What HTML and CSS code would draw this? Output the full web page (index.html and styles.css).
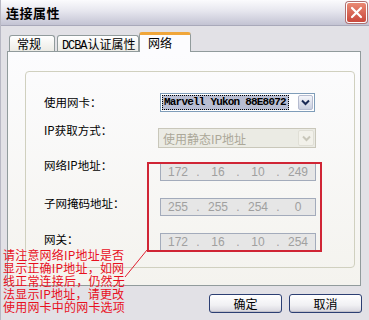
FILE: index.html
```html
<!DOCTYPE html>
<html lang="zh-CN">
<head>
    <meta charset="UTF-8">
    <title>连接属性</title>
    <link rel="stylesheet" href="styles.css">
</head>
<body>
    <div class="window">
        <div class="titlebar">
            <span class="title">连接属性</span>
            <span class="close-btn">
                <svg width="13" height="13" viewBox="0 0 13 13"><path d="M2 2 L11 11 M11 2 L2 11" stroke="#fff" stroke-width="2.2" stroke-linecap="round"/></svg>
            </span>
        </div>

        <div class="tabs">
            <div class="tab">常规</div>
            <div class="tab tab-wide"><span class="mono">DCBA</span>认证属性</div>
            <div class="tab active">网络</div>
        </div>

        <div class="panel">
            <div class="group">
                <div class="row">
                    <span class="label lbl-mid">使用网卡：</span>
                    <div class="combo">
                        <span class="combo-text"><span class="selected">Marvell Yukon 88E8072</span></span>
                        <span class="combo-btn">
                            <svg width="9" height="7" viewBox="0 0 9 7"><path d="M1 1.5 L4.5 5 L8 1.5" fill="none" stroke="#1a2a55" stroke-width="2"/></svg>
                        </span>
                    </div>
                </div>
                <div class="row">
                    <span class="label lbl-2">IP获取方式：</span>
                    <div class="combo disabled">
                        <span class="combo-text">使用静态IP地址</span>
                        <span class="combo-btn">
                            <svg width="9" height="7" viewBox="0 0 9 7"><path d="M1 1.5 L4.5 5 L8 1.5" fill="none" stroke="#c9c7ba" stroke-width="2"/></svg>
                        </span>
                    </div>
                </div>
                <div class="row">
                    <span class="label lbl-2">网络IP地址：</span>
                    <div class="ip-field">
                        <span class="oct">172</span><span class="dot">.</span><span class="oct">16</span><span class="dot">.</span><span class="oct">10</span><span class="dot">.</span><span class="oct">249</span>
                    </div>
                </div>
                <div class="row">
                    <span class="label lbl-5">子网掩码地址：</span>
                    <div class="ip-field">
                        <span class="oct">255</span><span class="dot">.</span><span class="oct">255</span><span class="dot">.</span><span class="oct">254</span><span class="dot">.</span><span class="oct">0</span>
                    </div>
                </div>
                <div class="row">
                    <span class="label lbl-6">网关：</span>
                    <div class="ip-field">
                        <span class="oct">172</span><span class="dot">.</span><span class="oct">16</span><span class="dot">.</span><span class="oct">10</span><span class="dot">.</span><span class="oct">254</span>
                    </div>
                </div>
            </div>
        </div>

        <div class="buttons">
            <button class="btn">确定</button>
            <button class="btn">取消</button>
        </div>
    </div>

    <!-- annotation overlay -->
    <div class="mark-box"></div>
    <svg class="mark-line" width="26" height="31" viewBox="0 0 26 31"><path d="M2 29 L24 2" stroke="#e02030" stroke-width="1"/></svg>
    <div class="note">
        请注意网络IP地址是否<br>
        显示正确IP地址，如网<br>
        线正常连接后，仍然无<br>
        法显示IP地址，请更改<br>
        使用网卡中的网卡选项
    </div>
</body>
</html>
```

FILE: styles.css
```css
body {
    margin: 0;
    font-family: "Noto Sans CJK SC", "Liberation Sans", sans-serif;
    font-size: 12px;
    color: #000;
    background: #e2e1e6;
    width: 369px;
    height: 320px;
    overflow: hidden;
    position: relative;
}

.window {
    height: 320px;
    border-left: 1px solid #b8b8c4;
    box-sizing: border-box;
}

/* title bar */
.titlebar {
    height: 25px;
    display: flex;
    align-items: center;
    justify-content: space-between;
    padding: 0 2px 0 5px;
    background: linear-gradient(#fbfbfd, #e6e6ee 45%, #c3c3d3);
    border-bottom: 1px solid #a9a9ba;
}

.title {
    font-size: 13px;
    font-weight: bold;
    letter-spacing: 0.5px;
}

.close-btn {
    width: 19px;
    height: 19px;
    display: flex;
    align-items: center;
    justify-content: center;
    border: 1px solid #fff;
    border-radius: 3px;
    background: linear-gradient(#e98a74, #c9483c);
    box-shadow: 0 0 0 1px #b07070;
}

/* tabs */
.tabs {
    display: flex;
    align-items: flex-end;
    height: 19px;
    margin-top: 6px;
    padding-left: 8px;
}

.tab {
    height: 16px;
    width: 46px;
    margin-right: 2px;
    padding-left: 7px;
    box-sizing: border-box;
    line-height: 16px;
    border: 1px solid #919b9c;
    border-bottom: none;
    border-radius: 3px 3px 0 0;
    background: linear-gradient(#ffffff, #ecebe5);
}

.tab-wide {
    width: 82px;
    padding-left: 4px;
}

.mono {
    font-family: "Liberation Mono", monospace;
    font-size: 12px;
    letter-spacing: -1.1px;
    margin-right: 1px;
}

.tab.active {
    width: 52px;
    margin-left: -2px;
    padding-left: 8px;
    line-height: 16px;
    background: #fcfcfe;
    border-top: 3px solid #f0a63a;
    position: relative;
    z-index: 1;
    margin-bottom: -1px;
    height: 20px;
}

/* panel */
.panel {
    margin-left: 6px;
    width: 354px;
    height: 235px;
    box-sizing: border-box;
    border: 1px solid #919b9c;
    background: linear-gradient(#fcfcfe, #f4f3ee);
    padding: 19px 0 0 17px;
}

.group {
    width: 330px;
    height: 197px;
    box-sizing: border-box;
    border: 1px solid #d0d0bf;
    border-radius: 4px;
    padding: 21px 0 0 18px;
    display: flex;
    flex-direction: column;
    gap: 16px;
}

.row {
    display: flex;
    height: 19px;
}

.label {
    width: 116px;
    line-height: 14px;
    font-size: 11.5px;
}

.lbl-mid { margin-top: 2px; }
.lbl-2 { margin-top: -5px; }
.lbl-5 { margin-top: -2px; }
.lbl-6 { margin-top: -1px; }

/* combo boxes */
.combo {
    width: 155px;
    height: 19px;
    box-sizing: border-box;
    border: 1px solid #7f9db9;
    background: #fff;
    display: flex;
    align-items: center;
    padding: 1px;
}

.combo-text {
    flex: 1;
    height: 15px;
    display: flex;
    align-items: center;
}

.selected {
    height: 15px;
    line-height: 15px;
    padding: 0 3px 0 2px;
    background: #b9bed3;
    outline: 1px dotted #000;
    outline-offset: -1px;
    font-family: "Liberation Mono", monospace;
    font-size: 11px;
    font-weight: bold;
    letter-spacing: -0.8px;
}

.combo-btn {
    width: 15px;
    height: 15px;
    display: flex;
    align-items: center;
    justify-content: center;
    border: 1px solid #b6bcd0;
    border-radius: 2px;
    box-sizing: border-box;
    background: linear-gradient(#f4f5fa, #c9cfe0);
}

.combo.disabled {
    width: 158px;
    height: 20px;
    margin-left: -2px;
    border-color: #c9c7ba;
    background: #ebebe4;
}

.combo.disabled .combo-text {
    color: #aca899;
    padding-left: 3px;
}

.combo.disabled .combo-btn {
    width: 16px;
    height: 16px;
    border-color: #e0dfd6;
    background: #f2f1ea;
}

/* ip fields */
.ip-field {
    width: 156px;
    height: 18px;
    box-sizing: border-box;
    border: 1px solid #a3abbb;
    background: #e6e6e6;
    display: flex;
    align-items: center;
    color: #a0a0a0;
    font-family: "Liberation Sans", sans-serif;
    font-size: 12px;
}

.oct {
    flex: 1;
    text-align: center;
}

.dot {
    width: 6px;
    text-align: center;
}

/* buttons */
.buttons {
    display: flex;
    justify-content: flex-end;
    gap: 7px;
    padding: 8px 7px 0 0;
}

.btn {
    width: 73px;
    height: 19px;
    padding: 0;
    font-family: "Noto Sans CJK SC", sans-serif;
    font-size: 12px;
    line-height: 15px;
    color: #000;
    border: 1px solid #2c3f73;
    border-radius: 3px;
    background: linear-gradient(#ffffff, #f0f0f3 60%, #d6d5dd);
    box-shadow: inset 0 -1px 0 #c2c1ca;
}

/* red annotation */
.mark-box {
    position: absolute;
    left: 147px;
    top: 162px;
    width: 171px;
    height: 86px;
    border: 2px solid #d02535;
}

.mark-line {
    position: absolute;
    left: 123px;
    top: 248px;
}

.note {
    position: absolute;
    left: 3px;
    top: 248px;
    color: #e8101e;
    font-size: 12px;
    line-height: 13px;
    letter-spacing: 0.2px;
}
```
